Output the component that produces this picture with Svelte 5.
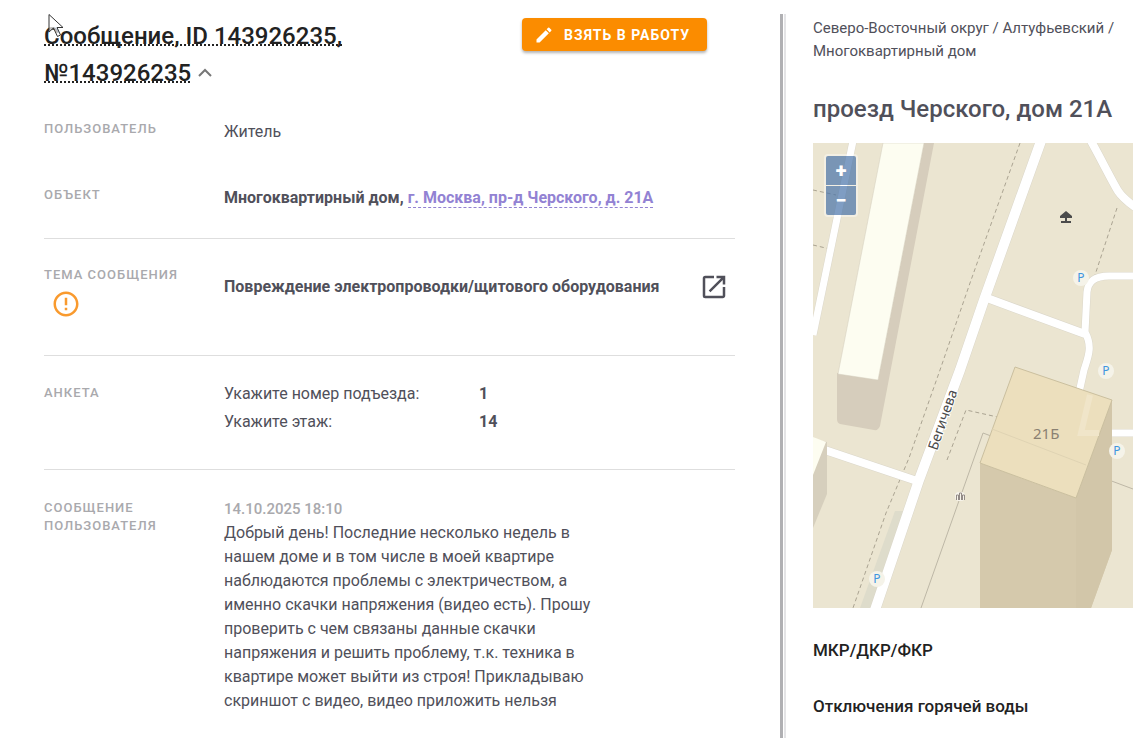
<script lang="ts">
  let expanded = true;

  const survey = [
    { question: 'Укажите номер подъезда:', answer: '1' },
    { question: 'Укажите этаж:', answer: '14' }
  ];

  const parking = [
    { x: 268, y: 135 },
    { x: 293, y: 228 },
    { x: 304, y: 308 },
    { x: 64, y: 436 }
  ];

  const sections = ['МКР/ДКР/ФКР', 'Отключения горячей воды'];

  function toggle() {
    expanded = !expanded;
  }
</script>

<div class="page">
  <main class="message">
    <svg class="pointer" width="16" height="24" viewBox="0 0 16 24" aria-hidden="true">
      <path d="M1 0.5V18l4.5-4 4 8.500 3-1.500-3.500-7.500H15z" fill="#fff" fill-opacity="0.7" stroke="#333" />
    </svg>

    <header class="header">
      <h1 class="title">
        <span class="title-text">Сообщение, ID 143926235, №143926235</span>
        <button class="toggle" aria-label="Свернуть" aria-expanded={expanded} on:click={toggle}>
          <svg width="16" height="10" viewBox="0 0 16 10">
            <path d="M2 8l6-6 6 6" fill="none" stroke="#777" stroke-width="2" />
          </svg>
        </button>
      </h1>
      <button class="take">
        <svg width="20" height="20" viewBox="0 0 24 24">
          <path fill="#fff" d="M3 17.250V21h3.750L17.810 9.940l-3.750-3.750L3 17.250zM20.710 7.040a1 1 0 0 0 0-1.410l-2.340-2.340a1 1 0 0 0-1.410 0l-1.830 1.830 3.750 3.750 1.830-1.830z" />
        </svg>
        Взять в работу
      </button>
    </header>

    <section class="row user">
      <h2 class="label">Пользователь</h2>
      <div class="value">Житель</div>
    </section>

    <section class="row object">
      <h2 class="label">Объект</h2>
      <div class="value strong">
        Многоквартирный дом, <a href="#address">г. Москва, пр-д Черского, д. 21А</a>
      </div>
    </section>

    <section class="row topic">
      <h2 class="label">
        Тема сообщения
        <svg class="warning" width="30" height="30" viewBox="0 0 24 24">
          <path fill="#f99a2e" d="M11 15h2v2h-2zm0-8h2v6h-2zm.99-5C6.470 2 2 6.480 2 12s4.470 10 9.990 10C17.520 22 22 17.520 22 12S17.520 2 11.990 2zM12 20c-4.420 0-8-3.580-8-8s3.580-8 8-8 8 3.580 8 8-3.580 8-8 8z" />
        </svg>
      </h2>
      <div class="value strong topic-value">
        <span>Повреждение электропроводки/щитового оборудования</span>
        <a class="open" href="#topic" aria-label="Открыть">
          <svg width="30" height="30" viewBox="0 0 24 24">
            <path fill="#50505a" d="M19 19H5V5h7V3H5a2 2 0 0 0-2 2v14a2 2 0 0 0 2 2h14c1.100 0 2-.9 2-2v-7h-2v7zM14 3v2h3.590l-9.830 9.830 1.410 1.410L19 6.410V10h2V3h-7z" />
          </svg>
        </a>
      </div>
    </section>

    <section class="row survey">
      <h2 class="label">Анкета</h2>
      <dl class="answers">
        {#each survey as item}
          <dt>{item.question}</dt>
          <dd>{item.answer}</dd>
        {/each}
      </dl>
    </section>

    <section class="row text">
      <h2 class="label">Сообщение пользователя</h2>
      <div class="value">
        <time class="date" datetime="2025-10-14T18:10">14.10.2025 18:10</time>
        <p class="body">
          Добрый день! Последние несколько недель в нашем доме и в том числе в моей квартире
          наблюдаются проблемы с электричеством, а именно скачки напряжения (видео есть). Прошу
          проверить с чем связаны данные скачки напряжения и решить проблему, т.к. техника в
          квартире может выйти из строя! Прикладываю скриншот с видео, видео приложить нельзя
        </p>
      </div>
    </section>
  </main>

  <div class="divider"></div>

  <aside class="building">
    <div class="crumbs">Северо-Восточный округ / Алтуфьевский / Многоквартирный дом</div>
    <h2 class="address">проезд Черского, дом 21А</h2>

    <div class="map">
      <svg class="canvas" viewBox="0 0 320 465" preserveAspectRatio="xMinYMin slice">
        <rect width="320" height="465" fill="#ebe5d1" />

        <!-- parking strip along the street -->
        <path d="M82 368h8L59 465H47z" fill="#dedccb" />

        <!-- footpaths -->
        <g fill="none" stroke="#aaa391" stroke-dasharray="4 3">
          <path d="M207 0L157 140 127 227 96 315 73 370 40 465" />
          <path d="M0 47l23 5M0 102l17 4" />
          <path d="M304 65l-22 67" />
          <path d="M134 317l19-50 45 10" />
        </g>
        <path d="M108 465l62-175 150 56" fill="none" stroke="#bdb7a6" />

        <!-- roads: edge first, then surface -->
        <g fill="none" stroke-linejoin="round">
          <g stroke="#dbd7ca">
            <path d="M228 -2L171 157 147 227 106 337 62 467" stroke-width="11" />
            <path d="M174 155l98 36M0 303l104 35" stroke-width="9" />
            <path d="M40 -2L0 192" stroke-width="8" />
            <path d="M278 -2c10 18 20 38 27 50 4 6 10 11 17 16" stroke-width="9" />
            <path d="M322 133h-26c-15 0-21 6-22 16l-2 40c8 15 3 25-1 38l-14 63h65" stroke-width="8" />
          </g>
          <g stroke="#fff">
            <path d="M228 -2L171 157 147 227 106 337 62 467" stroke-width="10" />
            <path d="M174 155l98 36M0 303l104 35" stroke-width="8" />
            <path d="M40 -2L0 192" stroke-width="7" />
            <path d="M278 -2c10 18 20 38 27 50 4 6 10 11 17 16" stroke-width="8" />
            <path d="M322 133h-26c-15 0-21 6-22 16l-2 40c8 15 3 25-1 38l-14 63h65" stroke-width="7" />
          </g>
        </g>

        <!-- long building -->
        <path d="M24 230l41 7L111 0h10L67 283q-2 5-6 4l-34-6q-3-1-3-5z" fill="#d6cdbc" />
        <path d="M70 0h41L65 237l-40-6z" fill="#fdfdf1" stroke="#d2cdbd" stroke-width="0.500" />

        <!-- corner building -->
        <path d="M0 296l14 3v52L0 385z" fill="#d6cfbd" />
        <path d="M0 294l13 5L0 332z" fill="#fdfdf1" />

        <!-- tower -->
        <path d="M167 320l96 35 36-98v150l-21 58H167z" fill="#d5c9ac" />
        <path d="M263 355l36-98v150l-21 58h-15z" fill="#d2c6a9" />
        <path d="M202 224l97 33-36 98-96-35z" fill="#ecdfbd" stroke="#cabf9f" />
        <path d="M277 252l-9 38h18" fill="none" stroke="#f0e5c9" stroke-width="6" />
        <path d="M179 286l94 36" fill="none" stroke="#dfd3b3" />

        <text class="house" x="220" y="296">21Б</text>
        <text class="street" transform="translate(124 308) rotate(-71)">Бегичева</text>

        {#each parking as spot}
          <circle cx={spot.x} cy={spot.y} r="8" fill="#f5f3e9" />
          <text class="parking" x={spot.x} y={spot.y + 4}>P</text>
        {/each}

        <!-- shelter -->
        <path d="M253 68l6 5v2h-5v3h4v2h-10v-2h4v-3h-5v-2z" fill="#4b4b4b" />
        <!-- waste containers -->
        <rect x="142" y="349" width="10" height="9" rx="4" fill="#f6f3ea" />
        <path d="M143.500 357v-5h2v5m1 0v-7h2v7m1 0v-5h2v5" fill="none" stroke="#928a86" />
      </svg>

      <div class="zoom">
        <button aria-label="Приблизить">+</button>
        <button aria-label="Отдалить">−</button>
      </div>
    </div>

    {#each sections as section}
      <h3 class="section">{section}</h3>
    {/each}
  </aside>
</div>

<style>
  :global(body) {
    margin: 0;
    background: #fff;
  }

  .page {
    display: grid;
    grid-template-columns: minmax(0, 1fr) 6px 347px;
    min-height: 100vh;
    box-sizing: border-box;
    padding-top: 14px;
    font-family: Roboto, sans-serif;
    font-size: 16px;
    line-height: 24px;
    color: #50505a;
  }

  h1,
  h2,
  h3,
  p,
  dl,
  dd {
    margin: 0;
  }

  button {
    border: none;
    font-family: inherit;
    cursor: pointer;
  }

  .message {
    position: relative;
    padding: 0 45px 16px 44px;
  }

  .pointer {
    position: absolute;
    top: 0;
    left: 48px;
  }

  .header {
    display: flex;
    align-items: flex-start;
    justify-content: space-between;
    gap: 64px;
    padding: 4px 28px 0 0;
  }

  .title {
    font-size: 24px;
    font-weight: 500;
    line-height: 37px;
    color: #222;
  }

  .title-text {
    text-decoration: underline dotted 2px;
    text-decoration-skip-ink: none;
    text-underline-offset: 0;
  }

  .toggle {
    padding: 0;
    background: none;
    vertical-align: 3px;
  }

  .toggle svg {
    display: block;
  }

  .take {
    display: flex;
    flex: none;
    align-items: center;
    gap: 10px;
    height: 33px;
    padding: 0 17px 0 12px;
    border-radius: 4px;
    background: #fb8c00;
    box-shadow: 0 2px 3px rgba(0, 0, 0, 0.3);
    color: #fff;
    font-size: 14px;
    font-weight: 700;
    letter-spacing: 1px;
    text-transform: uppercase;
  }

  .row {
    display: grid;
    grid-template-columns: 180px minmax(0, 1fr);
  }

  .label {
    font-size: 13px;
    font-weight: 500;
    line-height: 18px;
    letter-spacing: 1px;
    text-transform: uppercase;
    color: #a9a9ad;
  }

  .strong {
    font-weight: 700;
  }

  .user {
    padding-top: 28px;
  }

  .object {
    padding: 42px 0 28px;
  }

  .object a {
    color: #9282d3;
    text-decoration: none;
    border-bottom: 1px dashed #9282d3;
  }

  .topic,
  .survey,
  .text {
    border-top: 1px solid #dedede;
  }

  .topic {
    padding: 27px 0 31px;
  }

  .warning {
    display: block;
    margin: 5px 7px;
  }

  .topic-value {
    display: flex;
    align-items: flex-start;
    justify-content: space-between;
    padding: 9px 6px 0 0;
  }

  .open svg {
    display: block;
    margin: -3px 0;
  }

  .survey {
    padding: 26px 0 35px;
  }

  .survey .label,
  .text .label {
    padding-top: 2px;
  }

  .answers {
    display: grid;
    grid-template-columns: 255px 1fr;
    row-gap: 4px;
  }

  .answers dd {
    font-weight: 700;
  }

  .text {
    padding-top: 27px;
  }

  .date {
    display: block;
    font-size: 15px;
    font-weight: 500;
    color: #a9a9ad;
  }

  .body {
    max-width: 370px;
  }

  .divider {
    box-sizing: border-box;
    border-left: 3px solid #b0b0b3;
    border-right: 2px solid #e4e4e6;
  }

  .building {
    padding: 3px 0 16px 27px;
  }

  .crumbs {
    padding-right: 16px;
    font-size: 15px;
    line-height: 23px;
  }

  .address {
    padding: 28px 0 15px;
    font-size: 24px;
    font-weight: 500;
    line-height: 37px;
  }

  .map {
    position: relative;
    overflow: hidden;
  }

  .canvas {
    display: block;
    width: 100%;
  }

  .house {
    font: 15px 'Noto Sans', sans-serif;
    fill: #8a8172;
  }

  .street {
    font: 14px 'Noto Sans', sans-serif;
    fill: #4b4b4b;
    stroke: #fff;
    stroke-width: 2px;
    paint-order: stroke;
  }

  .parking {
    font: 12px 'Noto Sans', sans-serif;
    fill: #3f96e0;
    text-anchor: middle;
  }

  .zoom {
    position: absolute;
    top: 11px;
    left: 11px;
    display: grid;
    gap: 1px;
    padding: 2px;
    border-radius: 4px;
    background: rgba(255, 255, 255, 0.4);
  }

  .zoom button {
    width: 30px;
    height: 29px;
    padding: 0;
    background: rgba(0, 60, 136, 0.5);
    color: #fff;
    font-size: 20px;
    font-weight: 900;
    line-height: 29px;
  }

  .zoom button:first-child {
    border-radius: 2px 2px 0 0;
  }

  .zoom button:last-child {
    border-radius: 0 0 2px 2px;
  }

  .section {
    padding-top: 28px;
    font-size: 17px;
    font-weight: 500;
    line-height: 28px;
    color: #222;
  }
</style>
